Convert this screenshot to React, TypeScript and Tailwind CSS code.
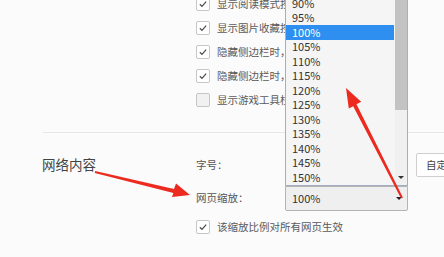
import React from "react";

const FONT = { fontFamily: '"Noto Sans CJK SC", "Noto Sans", sans-serif' };

const ZOOM_OPTIONS = ["90%", "95%", "100%", "105%", "110%", "115%", "120%", "125%", "130%", "135%", "140%", "145%", "150%"];

function Check({ checked }: { checked: boolean }) {
  return (
    <span
      className={
        "flex h-[14px] w-[14px] shrink-0 items-center justify-center rounded-[2px] border border-[#c6c6c6] " +
        (checked ? "bg-white" : "bg-[#f1f1f1]")
      }
    >
      {checked && (
        <svg viewBox="0 0 12 12" className="h-[10px] w-[10px]">
          <path d="M2.2 6.3 L4.8 8.8 L9.8 3.2" fill="none" stroke="#4a4a4a" strokeWidth="1.5" />
        </svg>
      )}
    </span>
  );
}

// labels that sit behind the open list get clipped at its left edge
function CheckRow({ checked, label, clip }: { checked: boolean; label: string; clip?: boolean }) {
  return (
    <div className="flex h-[24px] items-center gap-[7px]">
      <Check checked={checked} />
      <span
        className={
          "whitespace-nowrap text-[10.5px] text-[#5a5a5a] " + (clip ? "max-w-[68px] overflow-hidden" : "")
        }
      >
        {label}
      </span>
    </div>
  );
}

function Arrows() {
  return (
    <svg className="pointer-events-none absolute inset-0" width="444" height="257" viewBox="0 0 444 257">
      {/* arrow to the zoom label */}
      <polygon
        points="95.2,171 174,189 176,183.5 190,195 172,197 173.4,193 94.8,173"
        fill="#ec2a20"
      />
      {/* arrow from the select up into the list */}
      <polygon
        points="402.9,197.5 356.5,104.2 361.2,101.7 346,88 348.8,108.6 353.2,106.3 401.1,198.5"
        fill="#ec2a20"
      />
    </svg>
  );
}

function ZoomSelect() {
  return (
    <div className="relative w-[123px] shrink-0">
      {/* open list */}
      <div className="absolute bottom-full left-0 flex w-[123px] border border-[#a4afc6] bg-[#f5f5f5]">
        <div className="flex-1 overflow-hidden pr-[1px]">
          {ZOOM_OPTIONS.map((v) => (
            <div
              key={v}
              className={
                "flex h-[14.5px] items-center pl-[6px] text-[11px] leading-none " +
                (v === "100%" ? "bg-[#2e8ff0] text-white" : "text-[#333]")
              }
            >
              {v}
            </div>
          ))}
        </div>
        <div className="flex w-[12px] flex-col bg-[#f0f0f0]">
          <div className="h-[114px] bg-[#c3c3c3]" />
          <div className="flex flex-1 items-end justify-center pb-[6px]">
            <span className="h-0 w-0 border-x-[3px] border-t-[3px] border-x-transparent border-t-[#333]" />
          </div>
        </div>
      </div>
      {/* closed select */}
      <div className="flex h-[25px] items-center justify-between rounded-b-[2px] border border-[#b4b4b4] bg-[#efefef] pl-[6px] pr-[5px] text-[11px] text-[#333]">
        <span>100%</span>
        <span className="h-0 w-0 border-x-[3.5px] border-t-[3.5px] border-x-transparent border-t-[#222]" />
      </div>
    </div>
  );
}

export default function App() {
  return (
    <div className="relative h-[257px] w-[444px] overflow-hidden bg-[#fbfbfb]" style={FONT}>
      <div className="-mt-[8.5px] flex flex-col pl-[196px]">
        <CheckRow checked clip label="显示阅读模式按钮" />
        <CheckRow checked clip label="显示图片收藏按钮" />
        <CheckRow checked clip label="隐藏侧边栏时，显示按钮" />
        <CheckRow checked clip label="隐藏侧边栏时，显示按钮" />
        <CheckRow checked={false} clip label="显示游戏工具栏" />
      </div>

      <div className="ml-[43px] mt-[20px] border-t border-[#e6e6e6]" />

      <div className="flex pt-[20px]">
        <div className="flex h-[24px] w-[196px] shrink-0 items-center pl-[42px] text-[13.5px] text-[#444]">
          网络内容
        </div>
        <div className="flex shrink-0 flex-col">
          <div className="flex h-[24px] items-center">
            <span className="w-[89px] shrink-0 text-[10.5px] text-[#555]">字号：</span>
            <div className="w-[123px] shrink-0" />
            <button className="ml-[8px] h-[24px] shrink-0 whitespace-nowrap rounded-[2px] border border-[#cfcfcf] bg-white pl-[9px] pr-[10px] text-[10.5px] text-[#444]">
              自定义字体
            </button>
          </div>
          <div className="mt-[9px] flex items-center">
            <span className="w-[89px] shrink-0 text-[10.5px] text-[#555]">网页缩放：</span>
            <ZoomSelect />
          </div>
          <div className="mt-[4px]">
            <CheckRow checked label="该缩放比例对所有网页生效" />
          </div>
        </div>
      </div>

      <Arrows />
    </div>
  );
}
